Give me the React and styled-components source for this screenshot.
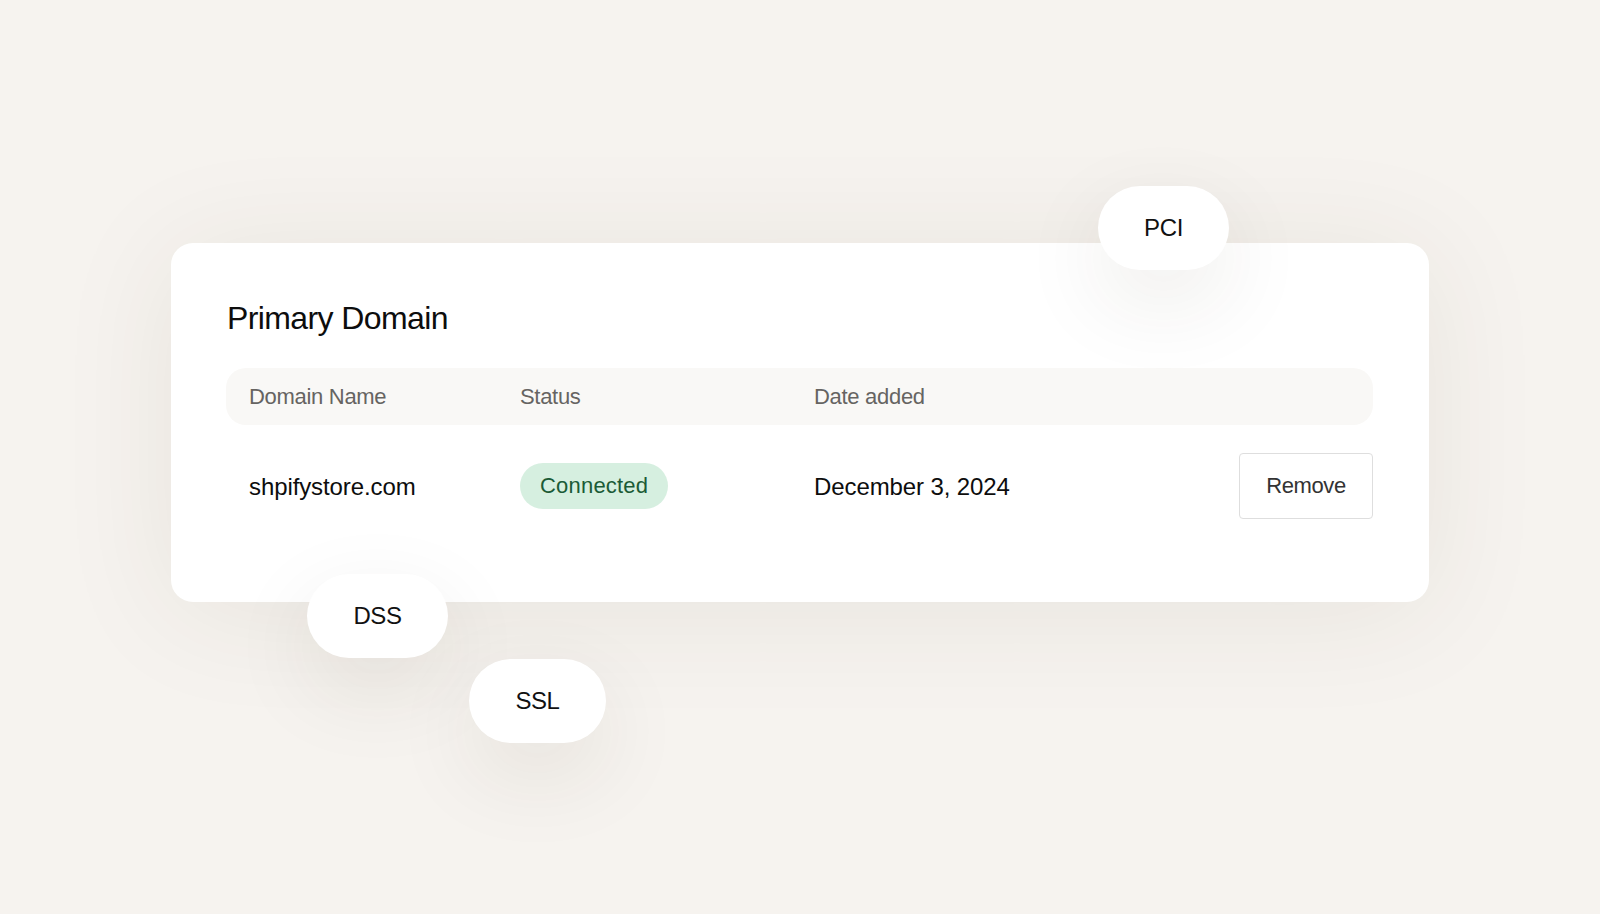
import React from "react";
import styled, { createGlobalStyle } from "styled-components";

const GlobalStyle = createGlobalStyle`
  html, body {
    margin: 0;
    padding: 0;
    background: #f6f3ef;
    font-family: "Liberation Sans", Arial, sans-serif;
    color: #111;
  }
  #root {
    min-height: 914px;
  }
`;

const domains = [
  { name: "shpifystore.com", status: "Connected", added: "December 3, 2024" },
];

const badges = [
  { label: "PCI", left: 927, top: -57, width: 131 },
  { label: "DSS", left: 136, top: 331, width: 141 },
  { label: "SSL", left: 298, top: 416, width: 137 },
];

function App() {
  return (
    <Page>
      <GlobalStyle />
      <Card>
        <Title>Primary Domain</Title>
        <Table>
          <HeaderRow>
            <HeaderCell>Domain Name</HeaderCell>
            <HeaderCell>Status</HeaderCell>
            <HeaderCell>Date added</HeaderCell>
            <span />
          </HeaderRow>
          {domains.map((d) => (
            <Row key={d.name}>
              <Cell>{d.name}</Cell>
              <Cell>
                <StatusPill>{d.status}</StatusPill>
              </Cell>
              <Cell>{d.added}</Cell>
              <RemoveButton>Remove</RemoveButton>
            </Row>
          ))}
        </Table>
        {badges.map((b) => (
          <Badge key={b.label} style={{ left: b.left, top: b.top, width: b.width }}>
            {b.label}
          </Badge>
        ))}
      </Card>
    </Page>
  );
}

const Page = styled.div`
  padding-top: 243px;
  display: flex;
  justify-content: center;
`;

const Card = styled.section`
  position: relative;
  width: 1258px;
  box-sizing: border-box;
  padding: 57px 56px 83px 55px;
  background: #ffffff;
  border-radius: 22px;
  box-shadow: 0 10px 120px rgba(70, 50, 30, 0.08);
`;

const Title = styled.h2`
  margin: 0 0 31px 1px;
  font-size: 32px;
  line-height: 37px;
  font-weight: 400;
  letter-spacing: -0.6px;
  color: #0d0d0d;
`;

const Table = styled.div`
  display: flex;
  flex-direction: column;
  gap: 28px;
`;

const columns = `271px 294px 1fr auto`;

const HeaderRow = styled.div`
  display: grid;
  grid-template-columns: ${columns};
  align-items: center;
  height: 57px;
  padding-left: 23px;
  background: #f9f8f6;
  border-radius: 20px;
`;

const HeaderCell = styled.span`
  font-size: 22px;
  letter-spacing: -0.3px;
  color: #666462;
`;

const Row = styled.div`
  display: grid;
  grid-template-columns: ${columns};
  align-items: center;
  padding-left: 23px;
`;

const Cell = styled.div`
  font-size: 24px;
  letter-spacing: -0.1px;
  color: #0d0d0d;
  padding-top: 2px;
`;

const StatusPill = styled.span`
  display: inline-flex;
  align-items: center;
  height: 46px;
  padding: 0 20px;
  margin-top: -2px;
  border-radius: 23px;
  background: #d6efe0;
  color: #1b5b36;
  font-size: 22px;
  letter-spacing: 0.2px;
`;

const RemoveButton = styled.button`
  width: 134px;
  height: 66px;
  border: 1.5px solid #dedede;
  border-radius: 4px;
  background: #fff;
  font-family: inherit;
  font-size: 22px;
  letter-spacing: -0.4px;
  color: #333;
  cursor: pointer;
`;

const Badge = styled.div`
  position: absolute;
  height: 84px;
  display: flex;
  align-items: center;
  justify-content: center;
  border-radius: 42px;
  background: #ffffff;
  font-size: 24px;
  letter-spacing: -0.4px;
  color: #111;
  box-shadow: 0 30px 90px rgba(60, 40, 20, 0.09);
`;

export default App;
